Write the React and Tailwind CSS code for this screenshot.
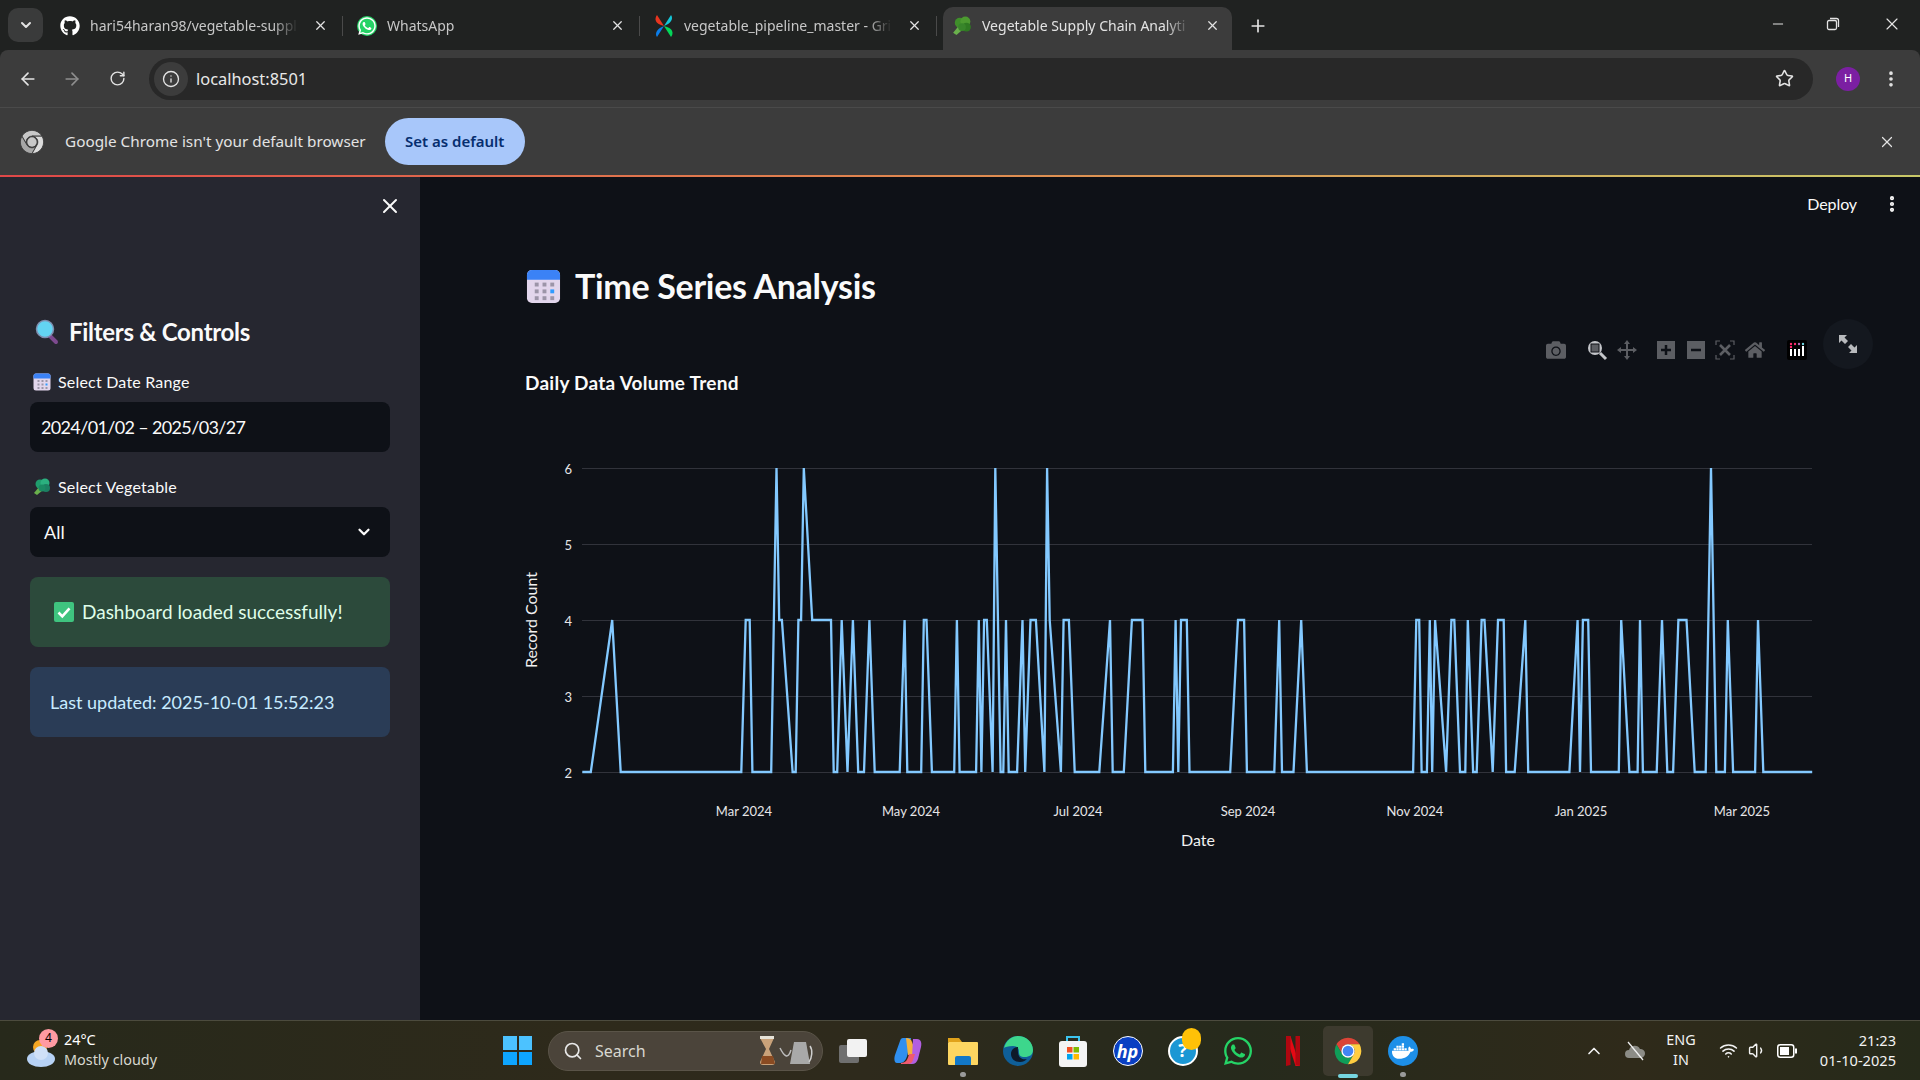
import { ArrowLeft, ArrowRight, RotateCw, Info, Star, X, Plus, Minus, ChevronDown, ChevronUp, EllipsisVertical, Search, Wifi, Volume1 } from "lucide-react"
import { FaGithub, FaWhatsapp, FaDocker, FaCamera, FaHome } from "react-icons/fa"

// points read off the reference, in zoom crop pixels
const leftPts = [[162,2],[181,2],[229,4],[248,2],[518,2],[528,4],[537,4],[543,2],[585,2],[597,6],[603,4],[609,4],[633,2],[640,2],[646,4],[652,4],[658,6],[677,4],[719,4],[725,2],[733,2],[743,4],[756,2],[768,4],[780,2],[793,2],[805,4],[817,2],[873,2],[884,4],[890,2],[921,2],[927,4],[933,4],[945,2],[995,2],[1001,4],[1007,2],[1044,2],[1050,4],[1056,2],[1062,4],[1068,4],[1081,2],[1087,6],[1099,2],[1105,2],[1111,4],[1117,2],[1136,2],[1148,4],[1154,2],[1166,4],[1178,4],[1197,2],[1203,6],[1209,4],[1234,2],[1240,4],[1252,4],[1265,2],[1320,2],[1344,4],[1350,2],[1375,2],[1393,4],[1417,4],[1423,2],[1485,2],[1491,4],[1497,2],[1503,4],[1516,4],[1522,2]]
const rightPts = [[74,2],[93,4],[108,4],[115,2],[182,2],[194,4],[201,2],[229,2],[248,4],[262,2],[522,2],[530,4],[537,4],[543,2],[556,2],[563,4],[569,2],[576,4],[603,2],[616,4],[623,4],[637,2],[650,2],[656,4],[669,2],[678,2],[690,4],[697,4],[717,2],[730,4],[744,4],[750,2],[771,2],[797,4],[804,2],[905,2],[925,4],[931,2],[938,4],[951,4],[958,2],[1026,2],[1032,4],[1052,2],[1072,2],[1078,4],[1085,2],[1119,2],[1132,4],[1145,2],[1159,2],[1172,4],[1192,4],[1212,2],[1239,2],[1252,6],[1265,2],[1286,2],[1293,4],[1306,2],[1360,2],[1367,4],[1380,2],[1500,2]]

const linePoints = [
  ...leftPts.map(([x, v]) => [510 + x / 2.24, v]),
  ...rightPts.map(([x, v]) => [1200 + x / 2.45, v]),
].map(([x, v]) => `${x.toFixed(1)},${772 - (v - 2) * 76}`).join(" ")

const xTicks = [["Mar 2024", 744], ["May 2024", 911], ["Jul 2024", 1078], ["Sep 2024", 1248], ["Nov 2024", 1415], ["Jan 2025", 1581], ["Mar 2025", 1742]]

const ChromeLogo = ({ size = 34, gray = false }) => (
  <svg width={size} height={size} viewBox="0 0 48 48">
    <path fill={gray ? "#c8c8c8" : "#db4437"} stroke={gray ? "#3c3c3c" : "none"} strokeWidth="1.5" d="M6.68 14A20 20 0 0 1 41.32 14H24A10 10 0 0 0 15.34 29Z" />
    <path fill={gray ? "#a8a8a8" : "#0f9d58"} stroke={gray ? "#3c3c3c" : "none"} strokeWidth="1.5" d="M6.68 14L15.34 29A10 10 0 0 0 32.66 29L24 44A20 20 0 0 1 6.68 14Z" />
    <path fill={gray ? "#dcdcdc" : "#ffcd40"} stroke={gray ? "#3c3c3c" : "none"} strokeWidth="1.5" d="M41.32 14H24A10 10 0 0 1 32.66 29L24 44A20 20 0 0 0 41.32 14Z" />
    <circle cx="24" cy="24" r="10" fill={gray ? "#3c3c3c" : "#fff"} />
    <circle cx="24" cy="24" r="8" fill={gray ? "#c8c8c8" : "#4285f4"} />
  </svg>
)

const CalendarEmoji = ({ size = 18 }) => (
  <svg width={size} height={size} viewBox="0 0 36 36">
    <rect x="1" y="1" width="34" height="34" rx="5" fill="#e2d6ec" />
    <path d="M1 11V6a5 5 0 0 1 5-5h24a5 5 0 0 1 5 5v5z" fill="#3b82f6" />
    {[9, 17, 25].map((x) => [14, 21, 28].map((y) => (
      <rect key={`${x}-${y}`} x={x} y={y} width="4" height="4" fill={x === 25 && y === 21 ? "#2f9bff" : "#9c95a8"} />
    )))}
  </svg>
)

const Broccoli = ({ size = 18, favicon = false }) => (
  <svg width={size} height={size} viewBox="0 0 18 18">
    <path d="M1 15l5-6 4 3-6 5z" fill="#6ab04c" />
    <circle cx="7" cy="6" r="4.5" fill={favicon ? "#3f8f2a" : "#1f9d6d"} />
    <circle cx="12" cy="5" r="4.5" fill={favicon ? "#4c9a30" : "#2bb07f"} />
    <circle cx="13" cy="10" r="4" fill={favicon ? "#2f7a22" : "#1c7f62"} />
    <circle cx="9" cy="10" r="3.5" fill={favicon ? "#38852a" : "#1b8a63"} />
  </svg>
)

const Tab = ({ icon, title, active }) => (
  <div className={active ? "flex items-center h-[43px] w-[289px] pl-[9px] pb-[6px] ml-[5px] bg-[#3c3c3c] rounded-t-[10px]" : "flex items-center h-[43px] w-[297px] pl-[13px] pb-[6px]"}>
    <div className="w-[20px] h-[20px] flex items-center justify-center shrink-0">{icon}</div>
    <div className={active
      ? "ml-[10px] w-[208px] overflow-hidden whitespace-nowrap text-[14px] text-[#e3e3e3] [mask-image:linear-gradient(90deg,#000_88%,transparent)]"
      : "ml-[10px] w-[208px] overflow-hidden whitespace-nowrap text-[14px] text-[#c7c7c7] [mask-image:linear-gradient(90deg,#000_88%,transparent)]"}>{title}</div>
    <X size={15} strokeWidth={2} className="ml-[15px] text-[#e3e3e3] shrink-0" />
    {!active && <div className="ml-[14px] w-[1px] h-[20px] bg-[#4a4a4a] shrink-0" />}
  </div>
)

const TabStrip = () => (
  <div className="h-[50px] bg-[#202221] flex items-end shrink-0 relative">
    <div className="absolute left-[8px] top-[8px] w-[35px] h-[34px] rounded-[10px] bg-[#3a3b3b] flex items-center justify-center">
      <ChevronDown size={16} strokeWidth={3} className="text-[#e3e3e3]" />
    </div>
    <div className="flex items-center ml-[47px]">
      <Tab title="hari54haran98/vegetable-suppl" icon={<FaGithub size={20} className="text-white" />} />
      <Tab title="WhatsApp" icon={
        <span className="w-[20px] h-[20px] rounded-full bg-[#25d366] flex items-center justify-center"><FaWhatsapp size={20} className="text-white" /></span>
      } />
      <Tab title="vegetable_pipeline_master - Gri" icon={
        <svg width="22" height="24" viewBox="0 0 20 22">
          <path d="M10 11L3 0c-3 4-2 9 7 11z" fill="#e8351f" />
          <path d="M10 11l7-11c3 4-1 9-7 11z" fill="#14c6d8" />
          <path d="M10 11l7 11c3-4 2-9-7-11z" fill="#04d659" />
          <path d="M10 11L3 22c-3-4 1-9 7-11z" fill="#0b7de8" />
        </svg>
      } />
      <Tab active title="Vegetable Supply Chain Analyti" icon={<Broccoli size={20} favicon />} />
      <Plus size={20} strokeWidth={2} className="ml-[16px] mb-[6px] text-[#e3e3e3]" />
    </div>
    <div className="absolute right-[18px] top-[14px] flex items-center text-[#e3e3e3]">
      <Minus size={16} strokeWidth={1.5} />
      <svg width="16" height="16" viewBox="0 0 16 16" fill="none" stroke="currentColor" strokeWidth="1.3" className="ml-[39px]">
        <rect x="2.5" y="4.5" width="9" height="9" rx="1.5" />
        <path d="M5 2.5h6.5a2 2 0 0 1 2 2V11" />
      </svg>
      <X size={20} strokeWidth={1.4} className="ml-[41px]" />
    </div>
  </div>
)

const Toolbar = () => (
  <div className="h-[58px] bg-[#3c3c3c] rounded-t-[8px] flex items-center shrink-0 border-b border-[#4a4a4a] text-[#e3e3e3]">
    <ArrowLeft size={20} strokeWidth={2} className="ml-[18px]" />
    <ArrowRight size={20} strokeWidth={2} className="ml-[24px] text-[#8e8e8e]" />
    <RotateCw size={17} strokeWidth={2} className="ml-[27px]" />
    <div className="ml-[23px] w-[1664px] h-[42px] bg-[#282828] rounded-full flex items-center pl-[5px]">
      <div className="w-[34px] h-[34px] rounded-full bg-[#3c3c3c] flex items-center justify-center">
        <Info size={18} strokeWidth={1.8} />
      </div>
      <span className="ml-[8px] mt-[2px] text-[16.4px] text-[#e8e8e8]">localhost:8501</span>
      <Star size={19} strokeWidth={2} className="ml-auto mr-[19px]" />
    </div>
    <div className="ml-[23px] w-[24px] h-[24px] rounded-full bg-[#7b1fa2] text-white text-[11px] flex items-center justify-center">H</div>
    <EllipsisVertical size={20} strokeWidth={2.4} className="ml-[21px]" />
  </div>
)

const InfoBar = () => (
  <div className="h-[67px] bg-[#3c3c3c] flex items-center shrink-0 text-[#e3e3e3]">
    <div className="ml-[18px]"><ChromeLogo size={28} gray /></div>
    <span className="ml-[19px] text-[15.3px]">Google Chrome isn't your default browser</span>
    <div className="ml-[19px] w-[140px] h-[47px] rounded-full bg-[#a8c7fa] text-[#062e6f] text-[15px] font-semibold flex items-center justify-center">Set as default</div>
    <X size={18} strokeWidth={1.6} className="ml-auto mr-[24px]" />
  </div>
)

const Sidebar = () => (
  <aside className="w-[420px] shrink-0 bg-[#262730] px-[30px] text-[#fafafa] flex flex-col">
    <div className="flex justify-end -mr-[12px] mt-[17px]">
      <X size={24} strokeWidth={2} />
    </div>
    <div className="mt-[98px] h-[32px] flex items-center gap-[9px] pl-[4px]">
      <svg width="26" height="26" viewBox="0 0 26 26">
        <path d="M15 16l7 7" stroke="#7d4a8f" strokeWidth="4" strokeLinecap="round" />
        <circle cx="11" cy="10" r="8.5" fill="#63d4f2" stroke="#7f8fb0" strokeWidth="1.5" />
      </svg>
      <span className="text-[24px] font-bold leading-[32px] tracking-[-0.3px]">Filters &amp; Controls</span>
    </div>
    <div className="mt-[24px] h-[20px] flex items-center gap-[7px] text-[16px] pl-[3px] tracking-[0.2px]">
      <CalendarEmoji />
      <span>Select Date Range</span>
    </div>
    <div className="mt-[10px] h-[50px] bg-[#0e1117] rounded-[8px] flex items-center px-[11px] text-[18px] tracking-[-0.65px]">2024/01/02 – 2025/03/27</div>
    <div className="mt-[25px] h-[20px] flex items-center gap-[7px] text-[16px] pl-[3px] tracking-[0.2px]">
      <Broccoli />
      <span>Select Vegetable</span>
    </div>
    <div className="mt-[10px] h-[50px] bg-[#0e1117] rounded-[8px] flex items-center justify-between pl-[14px] pr-[17px] text-[18px]">
      All
      <ChevronDown size={18} strokeWidth={3} />
    </div>
    <div className="mt-[20px] h-[70px] bg-[#2c4a3b] rounded-[8px] flex items-center pl-[24px] gap-[8px] text-[19px] text-[#dffde9]">
      <svg width="20" height="20" viewBox="0 0 20 20">
        <rect width="20" height="20" rx="2" fill="#3fc47f" />
        <path d="M4.5 10.5l3.8 3.8 7.2-8" stroke="#fff" strokeWidth="2.6" fill="none" />
      </svg>
      <span>Dashboard loaded successfully!</span>
    </div>
    <div className="mt-[20px] h-[70px] bg-[#2a3c56] rounded-[8px] flex items-center pl-[20px] text-[18px] text-[#c7ebff]">
      Last updated: 2025-10-01 15:52:23
    </div>
  </aside>
)

const ModeBar = () => (
  <div className="absolute right-[113px] -top-[32px] flex items-center text-[#5c5e63]">
    <FaCamera size={20} className="mr-[20px]" />
    <svg width="22" height="22" viewBox="0 0 22 22" className="mr-[9px]">
      <path d="M14 14l6 6" stroke="#c4c6ca" strokeWidth="3" />
      <circle cx="9" cy="9" r="7" fill="#c4c6ca" />
      <rect x="5" y="5" width="8" height="8" fill="#5c5e63" stroke="#0e1117" strokeWidth="1" />
    </svg>
    <svg width="20" height="20" viewBox="0 0 20 20" fill="currentColor" className="mr-[20px]">
      <path d="M10 0l3 4h-2v5h5V7l4 3-4 3v-2h-5v5h2l-3 4-3-4h2v-5H4v2l-4-3 4-3v2h5V4H7z" />
    </svg>
    <svg width="18" height="18" viewBox="0 0 18 18" className="mr-[12px]">
      <rect width="18" height="18" fill="currentColor" />
      <path d="M9 4v10M4 9h10" stroke="#0e1117" strokeWidth="2.5" />
    </svg>
    <svg width="18" height="18" viewBox="0 0 18 18" className="mr-[10px]">
      <rect width="18" height="18" fill="currentColor" />
      <path d="M4 9h10" stroke="#0e1117" strokeWidth="2.5" />
    </svg>
    <svg width="20" height="20" viewBox="0 0 20 20" fill="none" stroke="currentColor" strokeWidth="1.2" className="mr-[10px]">
      <path d="M1 5V1h4M15 1h4v4M19 15v4h-4M5 19H1v-4" />
      <path d="M5 5l10 10M15 5L5 15" strokeWidth="2.6" />
    </svg>
    <FaHome size={20} className="mr-[22px]" />
    <svg width="20" height="20" viewBox="0 0 20 20">
      <rect width="20" height="20" rx="2" fill="#000" />
      <path d="M4 9v7M8 9v7M12 9v7M16 6v10" stroke="#fff" strokeWidth="2" />
      <circle cx="4" cy="4" r="1.2" fill="#ff2a6d" />
      <circle cx="8" cy="4" r="1.2" fill="#ff2a6d" />
      <circle cx="12" cy="4" r="1.2" fill="#b06ab3" />
      <circle cx="16" cy="4" r="1.2" fill="#6fd3e0" />
      <circle cx="4" cy="7" r="1.2" fill="#ff2a6d" />
    </svg>
  </div>
)

const Chart = () => (
  <svg width="1330" height="465" viewBox="510 395 1330 465" className="-ml-[16px] block">
    {[468.5, 544.5, 620.5, 696.5, 772.5].map((y) => (
      <line key={y} x1="582" x2="1812" y1={y} y2={y} stroke="#31333b" />
    ))}
    <polyline points={linePoints} fill="none" stroke="#83c9ff" strokeWidth="2.3" strokeLinejoin="miter" />
    {[6, 5, 4, 3, 2].map((v) => (
      <text key={v} x="572" y={772 - (v - 2) * 76 + 6} textAnchor="end" className="fill-[#e6e6e8] text-[13px]">{v}</text>
    ))}
    {xTicks.map(([label, x]) => (
      <text key={label} x={x} y="816" textAnchor="middle" className="fill-[#e6e6e8] text-[13px]">{label}</text>
    ))}
    <text x="1198" y="846" textAnchor="middle" className="fill-[#f0f0f0] text-[16px]">Date</text>
    <text transform="translate(537 620) rotate(-90)" textAnchor="middle" className="fill-[#f0f0f0] text-[16px]">Record Count</text>
  </svg>
)

const Main = () => (
  <main className="flex-1 bg-[#0e1117] pl-[106px] text-[#fafafa] flex flex-col">
    <div className="h-[54px] flex items-center justify-end gap-[25px] pr-[18px]">
      <span className="text-[16px] tracking-[-0.1px]">Deploy</span>
      <EllipsisVertical size={20} strokeWidth={3} />
    </div>
    <div className="mt-[37px] h-[36px] flex items-center gap-[14px]">
      <CalendarEmoji size={35} />
      <span className="text-[34px] font-bold leading-[36px] tracking-[-0.3px]">Time Series Analysis</span>
    </div>
    <div className="relative mt-[67px]">
      <ModeBar />
      <div className="absolute right-[47px] -top-[52px] w-[50px] h-[50px] rounded-full bg-[#14181f] flex items-center justify-center">
        <svg width="20" height="20" viewBox="0 0 20 20" fill="#b8babd">
          <path d="M1 1h8L6.500 3.500l3.500 3.500-3 3-3.500-3.500L1 9z" />
          <path d="M19 19h-8l2.500-2.500-3.500-3.500 3-3 3.500 3.500L19 11z" />
        </svg>
      </div>
      <div className="h-[24px] -ml-[1px] text-[19px] font-bold leading-[24px] tracking-[0.25px]">Daily Data Volume Trend</div>
      <Chart />
    </div>
  </main>
)

const TaskIcon = ({ children, dot }) => (
  <div className="relative w-[55px] h-[50px] flex items-center justify-center shrink-0">
    {children}
    {dot && <div className="absolute bottom-[-1px] left-[25px] w-[6px] h-[5px] rounded-full bg-[#9a9a9a]" />}
  </div>
)

const Taskbar = () => (
  <div className="h-[60px] shrink-0 border-t border-[#4c4b3e] bg-[linear-gradient(90deg,#27291b,#2e2a1b_30%,#2e2a1c_45%,#262a1c_65%,#2f2a1a_85%,#262a1a)] flex items-center relative text-white">
    <div className="relative ml-[25px] w-[39px] h-[40px] shrink-0">
      <svg width="32" height="36" viewBox="0 0 32 36" className="absolute left-0 top-[2px]">
        <circle cx="15" cy="14" r="7" fill="#f5a623" />
        <ellipse cx="16" cy="26" rx="14" ry="8" fill="#b7d2f5" />
        <circle cx="16" cy="20" r="7" fill="#cfe0f8" />
      </svg>
      <div className="absolute left-[14px] -top-[2px] w-[19px] h-[19px] rounded-full bg-[#ff9aa2] text-black text-[12px] flex items-center justify-center">4</div>
    </div>
    <div className="flex flex-col text-[14.4px] leading-[20px] w-[100px] mb-[2px] shrink-0 whitespace-nowrap">
      <span>24°C</span>
      <span className="text-[#d8d8d0]">Mostly cloudy</span>
    </div>
    <div className="ml-[339px] grid grid-cols-2 gap-[2px] w-[29px] h-[29px] shrink-0">
      <div className="bg-[#4cc2ff]" /><div className="bg-[#4cc2ff]" />
      <div className="bg-[#0ea5ff]" /><div className="bg-[#0ea5ff]" />
    </div>
    <div className="ml-[16px] w-[275px] h-[40px] rounded-full bg-[#4b443a] border border-[#5a5448] flex items-center pl-[14px] shrink-0">
      <Search size={20} strokeWidth={2} className="text-[#e8e8e8]" />
      <span className="ml-[12px] text-[16px] text-[#d8d8d0]">Search</span>
      <svg width="56" height="30" viewBox="0 0 56 30" className="ml-auto mr-[8px]">
        <path d="M2 2h14l-5 11 6 13a3 3 0 0 1-3 3H5a3 3 0 0 1-3-3l6-13z" fill="#c9a27a" />
        <path d="M4 20h11l2 8H3z" fill="#8a4b22" />
        <rect x="2" y="0" width="14" height="3" fill="#e6e2d8" />
        <path d="M36 6h12l4 22H32z" fill="#a9a9a9" />
        <path d="M33 14C30 24 26 20 22 12" stroke="#bdbdbd" strokeWidth="1.5" fill="none" />
        <path d="M52 10c3 4 2 12-1 16" stroke="#cfcfcf" strokeWidth="1.5" fill="none" />
      </svg>
    </div>
    <div className="flex items-center ml-[2px]">
      <TaskIcon>
        <svg width="30" height="30" viewBox="0 0 30 30">
          <rect x="1" y="9" width="20" height="18" rx="2" fill="#6f6f6f" />
          <rect x="9" y="3" width="20" height="18" rx="2" fill="#f2f2f2" />
        </svg>
      </TaskIcon>
      <TaskIcon>
        <svg width="30" height="30" viewBox="0 0 30 30">
          <path d="M10 2h8l-3 14c-1 6-3 11-8 11H4C1 27 1 22 2 19L7 5c.5-2 1.500-3 3-3z" fill="#2f8ff0" />
          <path d="M13 2c3 0 5 1 6 4l5 13h-9z" fill="#f4b23c" />
          <path d="M20 3h4c4 0 5 4 4 8l-3 12c-1 3-3 5-6 5h-5c3-1 4-4 5-7z" fill="#b25fe0" />
          <path d="M8 27c5 0 7-4 8-9h6l-2 6c-1 3-3 4-6 4H8z" fill="#ef5a6f" />
        </svg>
      </TaskIcon>
      <TaskIcon dot>
        <svg width="30" height="30" viewBox="0 0 30 30">
          <path d="M0 2h11l3 4H0z" fill="#e0a21b" />
          <rect x="0" y="6" width="30" height="23" rx="1" fill="#fdd661" />
          <path d="M9 20h12a2 2 0 0 1 2 2v7H7v-7a2 2 0 0 1 2-2z" fill="#1278c8" />
        </svg>
      </TaskIcon>
      <TaskIcon>
        <svg width="30" height="30" viewBox="0 0 30 30">
          <circle cx="15" cy="15" r="15" fill="#0f5f99" />
          <path d="M1 12C3 4 9 0 15 0c8 0 15 6 15 14 0 5-4 7-8 7-5 0-6-2-6-5 0-4-2-6-6-6-5 0-8 1-9 2z" fill="#3dd68c" />
          <path d="M15 11c-4 0-7 3-7 7s3 8 9 8c3 0 5-1 7-3-6 1-10-2-9-12z" fill="#0e1a2a" />
        </svg>
      </TaskIcon>
      <TaskIcon>
        <svg width="30" height="34" viewBox="0 0 30 34">
          <path d="M9 8V3h12v5" stroke="#3cc4ee" strokeWidth="2" fill="none" />
          <rect x="1" y="7" width="28" height="26" rx="3" fill="#f4f4f4" />
          <rect x="9" y="13" width="5.500" height="5.500" fill="#f25022" />
          <rect x="15.500" y="13" width="5.500" height="5.500" fill="#7fba00" />
          <rect x="9" y="20" width="5.500" height="5.500" fill="#00a4ef" />
          <rect x="15.500" y="20" width="5.500" height="5.500" fill="#ffb900" />
        </svg>
      </TaskIcon>
      <TaskIcon>
        <div className="w-[30px] h-[30px] rounded-full bg-[#0a3fc2] border border-white flex items-center justify-center text-[18px] italic font-bold leading-none">hp</div>
      </TaskIcon>
      <TaskIcon>
        <div className="w-[30px] h-[30px] rounded-full bg-[#1b97d4] border-[2px] border-white flex items-center justify-center text-[18px] font-bold">?</div>
        <div className="absolute left-[27px] top-[2px] w-[19px] h-[22px] rounded-full bg-[#ffc107]" />
      </TaskIcon>
      <TaskIcon>
        <FaWhatsapp size={32} className="text-[#25d366]" />
      </TaskIcon>
      <TaskIcon>
        <svg width="14" height="30" viewBox="0 0 14 30">
          <path d="M0 0h4.500l9.500 30H9.500z" fill="#e50914" />
          <path d="M0 0h4.500v29L0 30zM9.500 0H14v30l-4.500-1z" fill="#b00710" />
        </svg>
      </TaskIcon>
      <TaskIcon>
        <div className="absolute left-[3px] top-0 w-[50px] h-[50px] rounded-[5px] bg-[#3d3a2e]" />
        <div className="relative"><ChromeLogo size={32} /></div>
        <div className="absolute left-[18px] bottom-[-2px] w-[20px] h-[4px] rounded-full bg-[#76d6e0]" />
      </TaskIcon>
      <TaskIcon dot>
        <div className="w-[30px] h-[30px] rounded-full bg-[#1d8fe8] flex items-center justify-center"><FaDocker size={22} className="text-white" /></div>
      </TaskIcon>
    </div>
    <div className="ml-auto flex items-center text-[#f2f2f2] pr-[24px]">
      <ChevronUp size={20} strokeWidth={2} />
      <svg width="22" height="22" viewBox="0 0 22 22" className="ml-[20px]">
        <path d="M5 18a4 4 0 0 1 0-8 6 6 0 0 1 11-1 4.500 4.500 0 0 1 1 9z" fill="#8c8c86" />
        <path d="M4 2l15 18" stroke="#f0f0f0" strokeWidth="1.3" />
      </svg>
      <div className="ml-[7px] w-[56px] mb-[2px] flex flex-col items-center text-[14.4px] leading-[20px]">
        <span>ENG</span>
        <span>IN</span>
      </div>
      <Wifi size={19} strokeWidth={2} className="ml-[10px]" />
      <Volume1 size={19} strokeWidth={1.8} className="ml-[10px]" />
      <svg width="20" height="14" viewBox="0 0 20 14" className="ml-[10px]">
        <rect x="0.750" y="0.750" width="16" height="12.500" rx="2.500" fill="none" stroke="#fff" strokeWidth="1.500" />
        <rect x="3" y="3" width="9" height="8" fill="#fff" />
        <rect x="18" y="4.500" width="2" height="5" fill="#fff" />
      </svg>
      <div className="ml-[15px] w-[84px] mb-[2px] flex flex-col items-end text-[14.6px] leading-[20px]">
        <span>21:23</span>
        <span>01-10-2025</span>
      </div>
    </div>
  </div>
)

export default function App() {
  return (
    <div className="w-[1920px] h-[1080px] flex flex-col overflow-hidden font-['Lato','Noto_Sans',sans-serif] bg-[#202221]">
      <div className="font-['Noto_Sans',sans-serif] shrink-0">
        <TabStrip />
        <Toolbar />
        <InfoBar />
      </div>
      <div className="h-[2px] shrink-0 bg-[linear-gradient(90deg,#e04848,#e08a50_50%,#c8c868)]" />
      <div className="flex-1 flex min-h-0">
        <Sidebar />
        <Main />
      </div>
      <div className="font-['Noto_Sans',sans-serif]">
        <Taskbar />
      </div>
    </div>
  )
}
